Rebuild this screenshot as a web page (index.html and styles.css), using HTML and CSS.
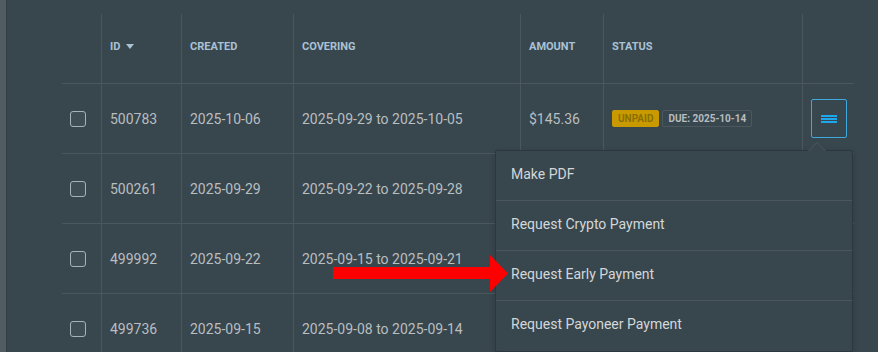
FILE: index.html
```html
<!DOCTYPE html>
<html lang="en">
<head>
  <meta charset="UTF-8">
  <meta name="viewport" content="width=device-width,initial-scale=1.0">
  <title>Invoices</title>
  <link rel="stylesheet" href="styles.css">
</head>
<body>
  <div class="page">
    <!-- side strip -->
    <div class="strip"></div>

    <div class="content">
      <div class="invoices">
        <div class="row head">
          <div class="cell"></div>
          <div class="cell">ID <span class="sort"></span></div>
          <div class="cell">Created</div>
          <div class="cell">Covering</div>
          <div class="cell">Amount</div>
          <div class="cell">Status</div>
          <div class="cell"></div>
        </div>

        <div class="row">
          <div class="cell check"><span class="box"></span></div>
          <div class="cell">500783</div>
          <div class="cell">2025-10-06</div>
          <div class="cell">2025-09-29 to 2025-10-05</div>
          <div class="cell">$145.36</div>
          <div class="cell">
            <span class="badge unpaid">UNPAID</span>
            <span class="badge due">DUE: 2025-10-14</span>
          </div>
          <div class="cell actions">
            <button class="menu-btn">
              <svg width="16" height="8" viewBox="0 0 16 8">
                <rect x="0" y="0" width="16" height="2" fill="#1ea6ef"/>
                <rect x="0" y="3" width="16" height="2" fill="#1ea6ef"/>
                <rect x="0" y="6" width="16" height="2" fill="#1ea6ef"/>
              </svg>
            </button>
          </div>
        </div>

        <!-- amount / status of these rows sit under the open menu -->
        <div class="row">
          <div class="cell check"><span class="box"></span></div>
          <div class="cell">500261</div>
          <div class="cell">2025-09-29</div>
          <div class="cell">2025-09-22 to 2025-09-28</div>
          <div class="cell"></div>
          <div class="cell"></div>
          <div class="cell actions"></div>
        </div>

        <div class="row">
          <div class="cell check"><span class="box"></span></div>
          <div class="cell">499992</div>
          <div class="cell">2025-09-22</div>
          <div class="cell">2025-09-15 to 2025-09-21</div>
          <div class="cell"></div>
          <div class="cell"></div>
          <div class="cell actions"></div>
        </div>

        <div class="row">
          <div class="cell check"><span class="box"></span></div>
          <div class="cell">499736</div>
          <div class="cell">2025-09-15</div>
          <div class="cell">2025-09-08 to 2025-09-14</div>
          <div class="cell"></div>
          <div class="cell"></div>
          <div class="cell actions"></div>
        </div>
      </div>
    </div>

    <!-- dropdown of the first row -->
    <div class="dropdown">
      <a href="#">Make PDF</a>
      <a href="#">Request Crypto Payment</a>
      <a href="#">Request Early Payment</a>
      <a href="#">Request Payoneer Payment</a>
    </div>

    <!-- annotation arrow -->
    <svg class="arrow" width="175" height="37" viewBox="0 0 175 37">
      <rect x="0" y="12" width="159" height="12" fill="#ff0000"/>
      <polygon points="157,0 175,18.5 157,37" fill="#ff0000"/>
    </svg>
  </div>
</body>
</html>
```

FILE: styles.css
```css
body {
  margin: 0;
  padding: 0;
  background: #38464d;
  font-family: Roboto, 'Liberation Sans', sans-serif;
  color: #b9bec1;
  overflow: hidden;
}
.page {
  position: relative;
  display: flex;
  height: 352px;
}
.strip {
  width: 6px;
  background: #505c62;
  border-right: 1px solid #323e44;
  flex-shrink: 0;
}
.content {
  padding: 14px 0 0 55px;
}
.invoices {
  width: 792px;
}
.row {
  display: grid;
  grid-template-columns: 39px 80px 112px 227px 83px 199px 52px;
  height: 70px;
  box-sizing: border-box;
  border-bottom: 1px solid #4a585e;
  font-size: 14px;
}
.cell {
  display: flex;
  align-items: center;
  padding: 0 8px;
  border-left: 1px solid #4a585e;
  white-space: nowrap;
}
.cell:first-child {
  border-left: none;
}
.head {
  font-size: 11px;
  font-weight: bold;
  text-transform: uppercase;
  color: #a9c2d6;
}
.head .cell {
  padding-bottom: 5px;
}
.sort {
  display: inline-block;
  margin-left: 6px;
  width: 0;
  height: 0;
  border-left: 4.5px solid transparent;
  border-right: 4.5px solid transparent;
  border-top: 5px solid #a9c2d6;
}
.check {
  padding: 0 0 0 8px;
}
.box {
  width: 14px;
  height: 14px;
  border: 1px solid #a4b3ba;
  border-radius: 3px;
  background: #3f4d54;
}
.badge {
  display: inline-block;
  box-sizing: border-box;
  height: 17px;
  line-height: 15px;
  padding: 0 5px;
  font-size: 10px;
  font-weight: bold;
  border-radius: 2px;
  margin-right: 3px;
}
.unpaid {
  background: #c99a00;
  color: #8b7000;
  border: 1px solid #c99a00;
}
.due {
  border: 1px solid #4c585e;
  color: #b7bdc0;
}
.actions {
  justify-content: center;
  padding: 0;
}
.menu-btn {
  width: 36px;
  height: 39px;
  padding: 0;
  display: flex;
  align-items: center;
  justify-content: center;
  background: transparent;
  border: 1px solid #3fa8de;
  border-radius: 2px;
}
.dropdown {
  position: absolute;
  left: 495px;
  top: 150px;
  width: 358px;
  box-sizing: border-box;
  background: #38464d;
  border: 1px solid #2d383e;
  border-radius: 2px;
  box-shadow: 0 2px 6px rgba(0, 0, 0, 0.15);
}
.dropdown::before,
.dropdown::after {
  content: "";
  position: absolute;
  width: 0;
  height: 0;
  border-left: 9px solid transparent;
  border-right: 9px solid transparent;
}
.dropdown::before {
  top: -9px;
  left: 312px;
  border-bottom: 9px solid #4a585e;
}
.dropdown::after {
  top: -8px;
  left: 313px;
  border-left-width: 8px;
  border-right-width: 8px;
  border-bottom: 8px solid #38464d;
}
.dropdown a {
  display: flex;
  align-items: center;
  height: 50px;
  box-sizing: border-box;
  padding: 0 15px 4px;
  border-bottom: 1px solid #4a565c;
  color: #d3d7d9;
  text-decoration: none;
  font-size: 14px;
}
.dropdown a:last-child {
  border-bottom: none;
}
.arrow {
  position: absolute;
  left: 333px;
  top: 255px;
}
```
